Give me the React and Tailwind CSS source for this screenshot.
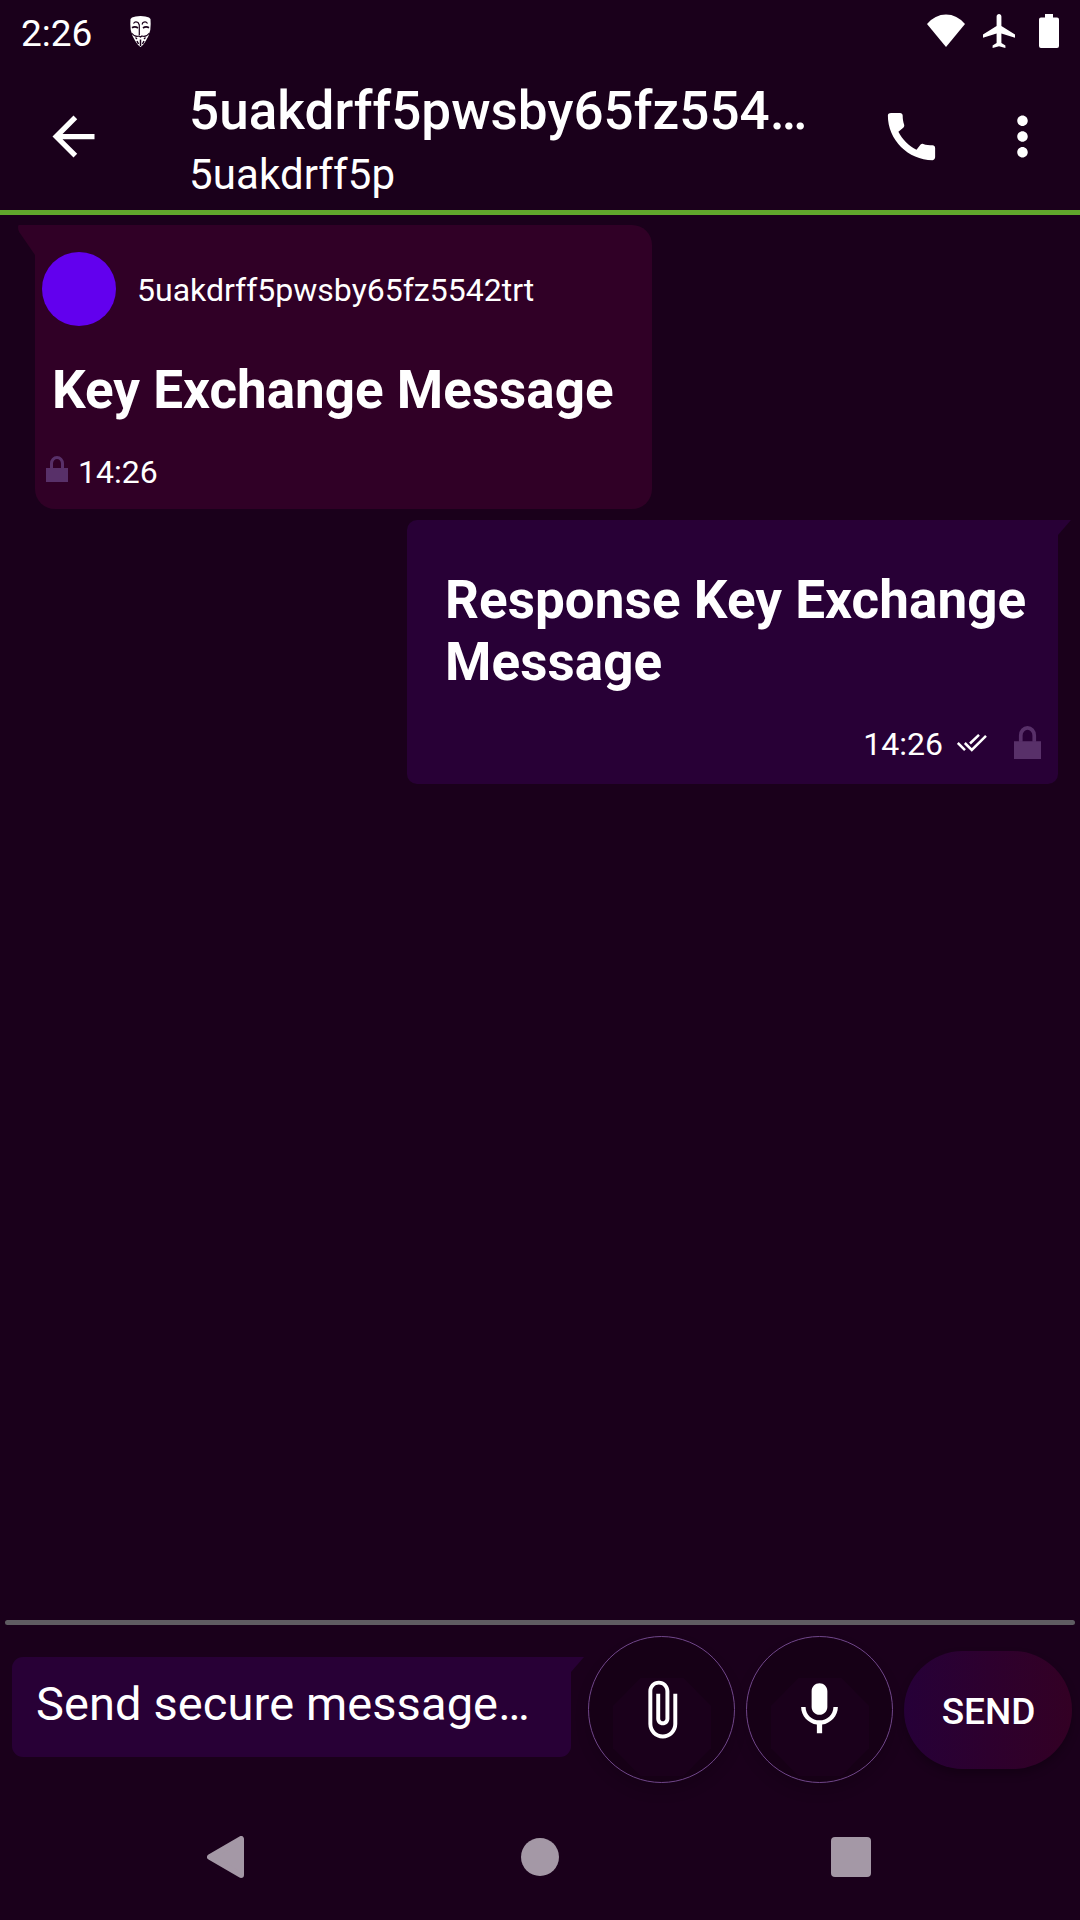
function Mask() {
  return (
    <svg className="h-[31px] w-[21px]" viewBox="0 0 21 31">
      <path fill="#fff" d="M2 1.500Q5 0 10.500 0T19 1.500L20.500 3Q21 8 20.300 14Q19 20 16 24.500Q13 29.500 10.500 31Q8 29.500 5 24.500Q2 20 .7 14Q0 8 .5 3Z" />
      <g fill="none" stroke="#1a001b" strokeWidth="1.200">
        <path d="M3.500 7.500Q5 5 8 6.500L9.300 9V19M17.500 7.500Q16 5 13 6.500L12 8.500" />
        <path strokeWidth="1.800" d="M2 11.800Q5 10 8 12M13 12Q16 10 19 11.800" />
        <path d="M1.500 17Q5 21.500 9 20L10.500 21L12 20Q16 21.500 19.500 17M5.500 21.500L7 23M15.500 21.500L14 23" />
        <path strokeWidth="1.500" d="M10.500 23.500V30M7 25L8.500 28M14 25L12.500 28" />
      </g>
    </svg>
  );
}

function Icon({ d }) {
  return (
    <svg className="size-[63px] shrink-0" viewBox="0 0 24 24" fill="#fff">
      <path d={d} />
    </svg>
  );
}

function Lock({ className }) {
  return (
    <svg className={className} viewBox="0 0 22 26" preserveAspectRatio="none">
      <path fill="#583069" d="M0 12h22v14H0z" />
      <path fill="none" stroke="#583069" strokeWidth="3" d="M5.500 12.500V7.500a5.500 6 0 0 1 11 0v5" />
    </svg>
  );
}

function RightTail() {
  return (
    <svg className="absolute top-0 left-full h-[15px] w-[13px]" viewBox="0 0 13 15">
      <path fill="#280036" d="M0 0h13L0 15z" />
    </svg>
  );
}

function RoundButton({ d }) {
  return (
    <div className="relative flex size-[147px] shrink-0 items-center justify-center rounded-full border border-[#70468a] bg-[#160016] shadow-[0_8px_14px_rgba(0,0,0,0.15)]">
      <div className="absolute top-[41px] left-[24px] size-[98px] bg-[#1a001b] [clip-path:polygon(28%_0,72%_0,100%_28%,100%_72%,72%_100%,28%_100%,0_72%,0_28%)]" />
      <div className="relative flex">
        <Icon d={d} />
      </div>
    </div>
  );
}

export default function App() {
  return (
    <div className="flex h-[1920px] w-[1080px] flex-col overflow-hidden bg-[#1a001b] font-['Roboto',sans-serif] text-white">
      <div className="flex h-[63px] shrink-0 items-start justify-between pr-[21px] pl-[21px]">
        <div className="flex">
          <span className="mt-[12px] w-[109px] text-[37px] leading-[43px]">2:26</span>
          <div className="mt-[16px]">
            <Mask />
          </div>
        </div>
        <div className="mt-[14px] flex items-start">
          <svg className="h-[34px] w-[40px]" viewBox="0 0 40 34">
            <path fill="#fff" d="M1 10Q9 .5 20 .5T39 10L20 33z" />
          </svg>
          <svg className="ml-[17.500px] h-[34px] w-[32px]" viewBox="2 2 20 20" preserveAspectRatio="none">
            <path fill="#fff" d="M22 16v-2l-8.500-5V3.500C13.500 2.670 12.830 2 12 2s-1.500.67-1.500 1.500V9L2 14v2l8.500-2.500V19L8 20.500V22l4-1 4 1v-1.500L13.500 19v-5.500z" />
          </svg>
          <svg className="ml-[24px] h-[34px] w-[20px]" viewBox="0 0 20 34">
            <path fill="#fff" d="M6 0h8v3.500h4a2 2 0 0 1 2 2V32a2 2 0 0 1-2 2H2a2 2 0 0 1-2-2V5.500a2 2 0 0 1 2-2h4z" />
          </svg>
        </div>
      </div>

      <header className="flex h-[147px] shrink-0 items-center pl-[42px]">
        <Icon d="M20 11H7.830l5.590-5.590L12 4l-8 8 8 8 1.410-1.410L7.830 13H20v-2z" />
        <div className="ml-[84px] flex w-[640px] flex-col pt-[8px]">
          <span className="h-[66px] text-[53px] leading-[64px] font-medium tracking-[0.05px]">5uakdrff5pwsby65fz554…</span>
          <span className="h-[58px] text-[42px] leading-[60px] tracking-[0.1px]">5uakdrff5p</span>
        </div>
        <div className="ml-[51px] flex gap-[48px]">
          <Icon d="M20.010 15.380c-1.230 0-2.420-.2-3.530-.56-.35-.12-.74-.03-1.010.24l-1.570 1.970c-2.830-1.350-5.480-3.900-6.890-6.830l1.950-1.660c.27-.28.35-.67.24-1.020-.37-1.110-.56-2.300-.56-3.530 0-.54-.45-.99-.99-.99H4.190C3.650 3 3 3.240 3 3.990 3 13.280 10.730 21 20.010 21c.71 0 .99-.63.99-1.180v-3.450c0-.54-.45-.99-.99-.99z" />
          <Icon d="M12 8c1.100 0 2-.9 2-2s-.9-2-2-2-2 .9-2 2 .9 2 2 2zm0 2c-1.100 0-2 .9-2 2s.9 2 2 2 2-.9 2-2-.9-2-2-2zm0 6c-1.100 0-2 .9-2 2s.9 2 2 2 2-.9 2-2-.9-2-2-2z" />
        </div>
      </header>
      <div className="h-[5px] shrink-0 bg-[#60a62c]" />

      <main className="flex grow flex-col pt-[10px]">
        <div className="relative ml-[35px] flex h-[284px] w-[617px] flex-col rounded-[20px] rounded-tl-none bg-[#300026]">
          <svg className="absolute top-0 right-full h-[30px] w-[17px]" viewBox="0 0 17 30">
            <path fill="#300026" d="M17 0H1Q0 0 0 2Q0 5 1.500 7.500L17 30z" />
          </svg>
          <div className="mt-[27px] flex h-[74px] items-center pl-[7px]">
            <div className="size-[74px] rounded-full bg-[#6200ee]" />
            <span className="mt-[2px] ml-[21px] text-[32px] leading-[37px]">5uakdrff5pwsby65fz5542trt</span>
          </div>
          <p className="mt-[33px] ml-[17px] text-[53px] leading-[62px] font-bold">Key Exchange Message</p>
          <div className="mt-[33px] flex items-start pl-[11px]">
            <Lock className="mt-[2px] h-[26px] w-[22px]" />
            <span className="ml-[10px] text-[32px] leading-[37px]">14:26</span>
          </div>
        </div>

        <div className="relative mt-[11px] ml-[407px] flex h-[264px] w-[651px] flex-col rounded-[10px] rounded-tr-none bg-[#280036]">
          <RightTail />
          <p className="mt-[49px] ml-[38px] text-[53px] leading-[62px] font-bold tracking-[0.06px]">
            Response Key Exchange
            <br />
            Message
          </p>
          <div className="mt-[33px] flex items-start justify-end pr-[17px]">
            <span className="text-[32px] leading-[37px]">14:26</span>
            <svg className="mt-[7px] ml-[14px] h-[20px] w-[30px]" viewBox="0 0 30 20" fill="none" stroke="#fff" strokeWidth="2.500">
              <path d="M.8 10L8 17.200M7.800 10L14.800 17L29 2.800M13 10.500L22 1.800" />
            </svg>
            <Lock className="ml-[27px] h-[33px] w-[27px]" />
          </div>
        </div>
      </main>

      <div className="mx-[5px] h-[5px] shrink-0 rounded-full bg-[#5f5c62]" />
      <footer className="flex h-[169px] shrink-0 items-center pl-[12px]">
        <div className="relative mb-[5px] flex h-[100px] w-[559px] shrink-0 items-center rounded-[11px] rounded-tr-none bg-[#280036] pl-[24px]">
          <RightTail />
          <span className="mt-[-6px] text-[47px] leading-[56px] tracking-[0.1px]">Send secure message…</span>
        </div>
        <div className="ml-[17px] flex gap-[11px]">
          <RoundButton d="M16.500 6v11.500c0 2.210-1.790 4-4 4s-4-1.790-4-4V5c0-1.380 1.120-2.500 2.500-2.500s2.500 1.120 2.500 2.500v10.500c0 .55-.45 1-1 1s-1-.45-1-1V6H10v9.500c0 1.380 1.120 2.500 2.500 2.500s2.500-1.120 2.500-2.500V5c0-2.210-1.790-4-4-4S7 2.790 7 5v12.500c0 3.040 2.460 5.500 5.500 5.500s5.500-2.460 5.500-5.500V6h-1.500z" />
          <RoundButton d="M12 14c1.660 0 2.990-1.340 2.990-3L15 5c0-1.660-1.340-3-3-3S9 3.340 9 5v6c0 1.660 1.340 3 3 3zm5.300-3c0 3-2.540 5.100-5.300 5.100S6.700 14 6.700 11H5c0 3.410 2.720 6.230 6 6.720V21h2v-3.280c3.280-.48 6-3.300 6-6.720h-1.700z" />
        </div>
        <div className="ml-[11px] flex h-[118px] w-[168px] items-center justify-center rounded-full bg-linear-to-r from-[#260038] via-[#2d002e] to-[#330024] pt-[4px] pl-px text-[37px] leading-[43px] font-medium shadow-[0_5px_8px_rgba(0,0,0,0.25)]">
          SEND
        </div>
      </footer>

      <nav className="flex h-[126px] shrink-0 items-center pl-[207px]">
        <svg className="h-[42px] w-[37px]" viewBox="0 0 37 42">
          <path fill="#a498a6" stroke="#a498a6" strokeWidth="6" strokeLinejoin="round" d="M3 21L34 3V39z" />
        </svg>
        <div className="ml-[277px] size-[38px] rounded-full bg-[#a498a6]" />
        <div className="ml-[272px] size-[40px] rounded-[4px] bg-[#a498a6]" />
      </nav>
    </div>
  );
}
